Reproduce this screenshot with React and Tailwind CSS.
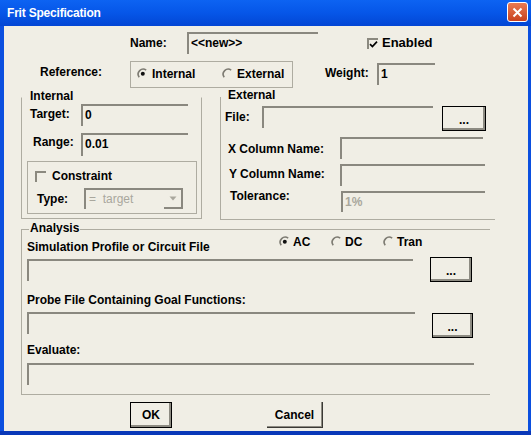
import React from 'react';

const font = "font-['Liberation_Sans',Arial,sans-serif]";

const Radio = ({ checked }) => (
  <svg width="12" height="12" viewBox="0 0 12 12" className="shrink-0">
    <path d="M2.2 9.2 A5 5 0 0 1 9.2 2.2" stroke="#7d7b72" strokeWidth="1.6" fill="none" />
    {checked && <circle cx="5.8" cy="5.8" r="2" fill="#111" />}
  </svg>
);

const Checkbox = ({ checked }) => (
  <div className="w-[11px] h-[11px] shrink-0 border-t-2 border-l-2 border-[#8b897f]">
    {checked && (
      <svg width="9" height="9" viewBox="0 0 9 9">
        <path d="M1 4.2 L3.4 6.6 L8 1.6" stroke="#000" strokeWidth="1.7" fill="none" />
      </svg>
    )}
  </div>
);

const Field = ({ w, h = 22, value, dim }) => (
  <div
    className={`shrink-0 border-t-2 border-l-2 border-[#8a887f] pl-[2px] leading-[18px] ${dim ? 'text-[#a9a79d]' : 'text-black'}`}
    style={{ width: w, height: h }}
  >
    {value}
  </div>
);

const DotsButton = ({ w = 44 }) => (
  <div
    className="shrink-0 h-[25px] border border-black shadow-[inset_-2px_-2px_0_#8d8b82] flex items-center justify-center pt-[2px]"
    style={{ width: w }}
  >
    ...
  </div>
);

const GroupTitle = ({ children, ml = 7 }) => (
  <div className="-mt-[9px] w-fit px-[1px] bg-[#f0eee5] leading-[14px]" style={{ marginLeft: ml }}>
    {children}
  </div>
);

export default function App() {
  return (
    <div className={`w-[531px] h-[435px] bg-[#0b4fdf] border-b-4 border-[#0938b8] flex flex-col text-[12px] font-bold ${font} select-none`}>
      {/* Title bar */}
      <div className="h-[26px] shrink-0 flex items-center bg-gradient-to-b from-[#0d63f2] via-[#0656e8] to-[#0346d4] pl-[7px] pr-[3px]">
        <span className="text-white text-[12px] font-bold tracking-[-0.2px]">Frit Specification</span>
        <div className="ml-auto mb-[2px] w-[21px] h-[20px] rounded-[3px] border border-white bg-gradient-to-b from-[#ea7a52] to-[#c8411d] flex items-center justify-center">
          <svg width="11" height="11" viewBox="0 0 11 11">
            <path d="M1.5 1.5 L9.5 9.5 M9.5 1.5 L1.5 9.5" stroke="#fff" strokeWidth="2" />
          </svg>
        </div>
      </div>

      {/* Body */}
      <div className="flex-1 ml-[4px] mr-[3px] bg-[#f0eee5] flex flex-col text-black leading-[14px]">
        {/* Name row */}
        <div className="mt-[6px] h-[22px] flex items-center pl-[126px]">
          <div className="w-[57px]">Name:</div>
          <Field w={131} value="<<new>>" />
          <div className="ml-[49px] flex items-center">
            <Checkbox checked />
            <span className="ml-[4px] text-[13px]">Enabled</span>
          </div>
        </div>

        {/* Reference row */}
        <div className="mt-[7px] h-[27px] flex items-start pl-[36px]">
          <div className="w-[90px] mt-[4px]">Reference:</div>
          <div className="w-[163px] h-[27px] border border-[#aeaca1] flex items-center pl-[6px] pb-[2px]">
            <div className="w-[85px] flex items-center">
              <Radio checked />
              <span className="ml-[3px]">Internal</span>
            </div>
            <div className="flex items-center">
              <Radio />
              <span className="ml-[3px]">External</span>
            </div>
          </div>
          <div className="ml-[32px] w-[52px] mt-[5px]">Weight:</div>
          <div className="mt-[2px]">
            <Field w={58} value="1" />
          </div>
        </div>

        {/* Internal / External */}
        <div className="mt-[9px] flex items-start pl-[17px]">
          <div className="w-[181px] h-[122px] border border-[#aeaca1] border-t-transparent flex flex-col">
            <GroupTitle ml={7}>Internal</GroupTitle>
            <div className="mt-[1px] flex items-start pl-[8px]">
              <div className="w-[51px] mt-[3px]">Target:</div>
              <Field w={107} value="0" />
            </div>
            <div className="mt-[7px] flex items-start pl-[11px]">
              <div className="w-[48px] mt-[2px]">Range:</div>
              <Field w={107} h={23} value="0.01" />
            </div>
            <div className="mt-[5px] ml-[5px] w-[170px] h-[53px] border border-[#aeaca1] flex flex-col">
              <div className="mt-[7px] h-[14px] flex items-center pl-[7px]">
                <Checkbox />
                <span className="ml-[6px]">Constraint</span>
              </div>
              <div className="mt-[5px] flex items-center pl-[9px]">
                <div className="w-[47px]">Type:</div>
                <div className="w-[99px] h-[21px] border-t-2 border-l-2 border-[#8a887f] flex">
                  <div className="flex-1 pl-[3px] leading-[18px] font-normal text-[#a9a79d]">= &nbsp;target</div>
                  <div className="w-[19px] h-[19px] border-r-2 border-b-2 border-[#8a887f] flex items-center justify-center">
                    <svg width="8" height="5" viewBox="0 0 8 5">
                      <path d="M0.5 0.5 L7.5 0.5 L4 4.5 Z" fill="#a9a79d" />
                    </svg>
                  </div>
                </div>
              </div>
            </div>
          </div>

          <div className="ml-[18px] w-[275px] h-[123px] border-l border-b border-[#aeaca1] flex flex-col">
            <GroupTitle ml={6}>External</GroupTitle>
            <div className="mt-[4px] flex items-start pl-[4px]">
              <div className="w-[37px] mt-[4px]">File:</div>
              <Field w={171} />
              <div className="ml-[9px]">
                <DotsButton w={44} />
              </div>
            </div>
            <div className="mt-[6px] flex items-start pl-[7px]">
              <div className="w-[112px] mt-[5px]">X Column Name:</div>
              <Field w={143} />
            </div>
            <div className="mt-[5px] flex items-start pl-[8px]">
              <div className="w-[111px] mt-[3px]">Y Column Name:</div>
              <Field w={145} />
            </div>
            <div className="mt-[5px] flex items-start pl-[9px]">
              <div className="w-[111px] -mt-[2px]">Tolerance:</div>
              <Field w={144} h={21} value="1%" dim />
            </div>
          </div>
        </div>

        {/* Analysis */}
        <div className="mt-[9px] ml-[17px] w-[469px] h-[166px] border-t border-l border-b border-[#aeaca1] flex flex-col">
          <GroupTitle ml={7}>Analysis</GroupTitle>
          <div className="flex items-start pl-[5px]">
            <div className="w-[252px] mt-[5px] whitespace-nowrap">Simulation Profile or Circuit File</div>
            <div className="w-[52px] flex items-center">
              <Radio checked />
              <span className="ml-[2px]">AC</span>
            </div>
            <div className="w-[52px] flex items-center">
              <Radio />
              <span className="ml-[2px]">DC</span>
            </div>
            <div className="flex items-center">
              <Radio />
              <span className="ml-[2px]">Tran</span>
            </div>
          </div>
          <div className="mt-[3px] flex items-start pl-[5px]">
            <div className="mt-[2px]">
              <Field w={386} />
            </div>
            <div className="ml-[17px]">
              <DotsButton w={42} />
            </div>
          </div>
          <div className="mt-[11px] pl-[5px] whitespace-nowrap">Probe File Containing Goal Functions:</div>
          <div className="mt-[5px] flex items-start pl-[5px]">
            <Field w={388} />
            <div className="ml-[17px] mt-[1px]">
              <DotsButton w={41} />
            </div>
          </div>
          <div className="mt-[5px] pl-[5px]">Evaluate:</div>
          <div className="mt-[6px] pl-[5px]">
            <Field w={447} />
          </div>
        </div>

        {/* Buttons */}
        <div className="mt-[7px] flex items-start pl-[126px]">
          <div className="w-[42px] h-[26px] border border-black shadow-[inset_-2px_-2px_0_#8d8b82] flex items-center justify-center">
            OK
          </div>
          <div className="ml-[95px] w-[56px] h-[26px] border-r border-b border-[#3a3935] shadow-[inset_-1px_-1px_0_#8d8b82] flex items-center justify-center">
            Cancel
          </div>
        </div>
      </div>
    </div>
  );
}
